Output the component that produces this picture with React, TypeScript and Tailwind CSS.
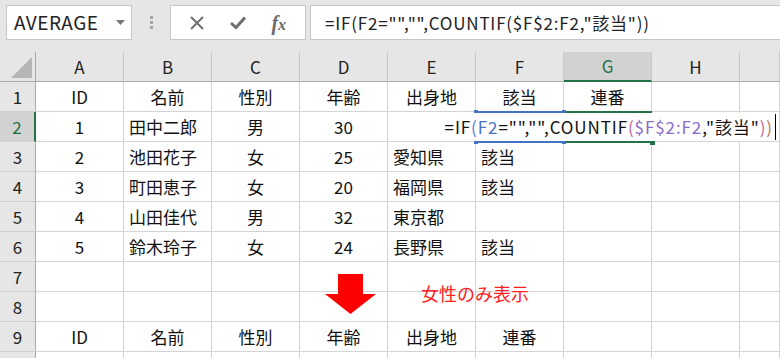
import React from "react";

const COLS = ["A", "B", "C", "D", "E", "F", "G", "H", ""];
const COL_W = [88, 88, 88, 88, 88, 88, 88, 88, 40];

type Align = "c" | "l";

// row number -> cell values (A..F), alignments
const ROWS: { n: string; cells: string[]; align: Align[] }[] = [
  { n: "1", cells: ["ID", "名前", "性別", "年齢", "出身地", "該当", "連番"], align: ["c", "c", "c", "c", "c", "c", "c"] },
  { n: "2", cells: ["1", "田中二郎", "男", "30"], align: ["c", "l", "c", "c"] },
  { n: "3", cells: ["2", "池田花子", "女", "25", "愛知県", "該当"], align: ["c", "l", "c", "c", "l", "l"] },
  { n: "4", cells: ["3", "町田恵子", "女", "20", "福岡県", "該当"], align: ["c", "l", "c", "c", "l", "l"] },
  { n: "5", cells: ["4", "山田佳代", "男", "32", "東京都", ""], align: ["c", "l", "c", "c", "l", "l"] },
  { n: "6", cells: ["5", "鈴木玲子", "女", "24", "長野県", "該当"], align: ["c", "l", "c", "c", "l", "l"] },
  { n: "7", cells: [], align: [] },
  { n: "8", cells: [], align: [] },
  { n: "9", cells: ["ID", "名前", "性別", "年齢", "出身地", "連番"], align: ["c", "c", "c", "c", "c", "c"] },
  { n: "", cells: [], align: [] },
];

function TopBar() {
  return (
    <div className="h-[52px] bg-[#e6e6e6] flex items-start pt-[5px] pl-[6px]">
      {/* name box */}
      <div className="w-[126px] h-[35px] bg-white border border-[#c6c6c6] flex items-center pl-[7px] pr-[6px]">
        <span className="flex-1 text-[19px] tracking-[0.5px] text-[#222]">AVERAGE</span>
        <svg width="9" height="5" viewBox="0 0 9 5">
          <path d="M0 0 L9 0 L4.5 5 Z" fill="#777" />
        </svg>
      </div>
      {/* grip dots */}
      <div className="w-[38px] h-[35px] flex flex-col items-center justify-center gap-[2px]">
        <span className="w-[3px] h-[3px] bg-[#a6a6a6]" />
        <span className="w-[3px] h-[3px] bg-[#a6a6a6]" />
        <span className="w-[3px] h-[3px] bg-[#a6a6a6]" />
      </div>
      {/* cancel / enter / fx */}
      <div className="w-[136px] h-[35px] bg-white border border-[#c6c6c6] flex items-center justify-around px-[6px]">
        <svg width="14" height="14" viewBox="0 0 14 14">
          <path d="M1 1 L13 13 M13 1 L1 13" stroke="#6f6f6f" strokeWidth="2" />
        </svg>
        <svg width="16" height="13" viewBox="0 0 16 13">
          <path d="M1 7 L6 11.5 L15 1.5" stroke="#6f6f6f" strokeWidth="3" fill="none" />
        </svg>
        <span className="italic font-bold text-[20px] text-[#6a6a6a] leading-none font-['Liberation_Serif',serif]">
          f<span className="text-[16px]">x</span>
        </span>
      </div>
      {/* formula input */}
      <div className="ml-[4px] flex-1 h-[35px] bg-white border border-[#c6c6c6] border-r-0 flex items-center pl-[14px] text-[17px] tracking-[0.8px] text-[#222]">
        =IF(F2="","",COUNTIF($F$2:F2,"該当"))
      </div>
    </div>
  );
}

function HeaderRow() {
  return (
    <div className="flex h-[30px] bg-[#e6e6e6]">
      <div className="w-[36px] h-full border-r border-b border-[#ababab] relative">
        <svg className="absolute right-[3px] bottom-[3px]" width="21" height="21" viewBox="0 0 21 21">
          <path d="M21 0 L21 21 L0 21 Z" fill="#b5b5b5" />
        </svg>
      </div>
      {COLS.map((c, i) => {
        const sel = c === "G";
        return (
          <div
            key={i}
            style={{ width: COL_W[i] }}
            className={
              "h-full flex items-center justify-center text-[17px] border-r border-[#c8c8c8] " +
              (sel
                ? "bg-[#d2d2d2] text-[#217346] border-b-2 border-b-[#217346]"
                : "text-[#222] border-b border-b-[#ababab]")
            }
          >
            {c}
          </div>
        );
      })}
    </div>
  );
}

function DataRow({ n, cells, align }: { n: string; cells: string[]; align: Align[] }) {
  const sel = n === "2";
  return (
    <div className="flex h-[30px]">
      <div
        className={
          "w-[36px] h-full flex items-center justify-center text-[17px] border-b border-b-[#d0d0d0] " +
          (sel
            ? "bg-[#d2d2d2] text-[#217346] border-r-2 border-r-[#217346]"
            : "bg-[#e6e6e6] text-[#222] border-r border-r-[#ababab]")
        }
      >
        {n}
      </div>
      {COL_W.map((w, i) => {
        const v = cells[i] ?? "";
        const a = align[i] ?? "c";
        return (
          <div
            key={i}
            style={{ width: w }}
            className={
              "h-full flex items-center text-[17px] text-[#111] border-r border-b border-[#d4d4d4] whitespace-nowrap " +
              (a === "c" ? "justify-center" : "justify-start pl-[5px]")
            }
          >
            {v}
          </div>
        );
      })}
    </div>
  );
}

function FormulaEdit() {
  return (
    <>
      {/* reference box around F2 */}
      <div className="absolute left-[476px] top-[111px] w-[88px] h-[2px] bg-[#4472c4]" />
      <div className="absolute left-[476px] top-[141px] w-[88px] h-[2px] bg-[#4472c4]" />
      <div className="absolute left-[474px] top-[110px] w-[4px] h-[4px] bg-[#4472c4]" />
      <div className="absolute left-[562px] top-[110px] w-[4px] h-[4px] bg-[#4472c4]" />
      <div className="absolute left-[474px] top-[140px] w-[4px] h-[4px] bg-[#4472c4]" />
      <div className="absolute left-[562px] top-[140px] w-[4px] h-[4px] bg-[#4472c4]" />
      {/* active cell G2 */}
      <div className="absolute left-[566px] top-[111px] w-[86px] h-[2px] bg-[#217346]" />
      <div className="absolute left-[566px] top-[141px] w-[86px] h-[2px] bg-[#217346]" />
      <div className="absolute left-[650px] top-[140px] w-[5px] h-[5px] bg-[#217346]" />
      {/* in-cell editor */}
      <div className="absolute left-[389px] top-[113px] w-[387px] h-[28px] bg-white flex items-center justify-end text-[17px] tracking-[0.9px] text-[#111] whitespace-nowrap">
        <span>
          =IF<span className="text-[#5b7fce]">(</span>
          <span className="text-[#4472c4]">F2</span>="","",COUNTIF
          <span className="text-[#c8649a]">(</span>
          <span className="text-[#8a6ccc]">$F$2:F2</span>,"該当"
          <span className="text-[#c8649a]">)</span>
          <span className="text-[#b27a5a]">)</span>
        </span>
        <span className="ml-[2px] w-[1px] h-[26px] bg-black" />
      </div>
    </>
  );
}

export default function App() {
  return (
    <div className="w-[780px] h-[358px] overflow-hidden bg-white relative font-['Noto_Sans_CJK_JP',sans-serif]">
      <TopBar />
      <HeaderRow />
      {ROWS.map((r, i) => (
        <DataRow key={i} {...r} />
      ))}
      <FormulaEdit />
      {/* annotation */}
      <svg className="absolute left-[325px] top-[274px]" width="51" height="40" viewBox="0 0 51 40">
        <path d="M13 0 L38 0 L38 20 L51 20 L25.5 40 L0 20 L13 20 Z" fill="#ff0000" />
      </svg>
      <div className="absolute left-[421px] top-[280px] text-[18px] leading-[26px] text-[#ff2020]">
        女性のみ表示
      </div>
    </div>
  );
}
